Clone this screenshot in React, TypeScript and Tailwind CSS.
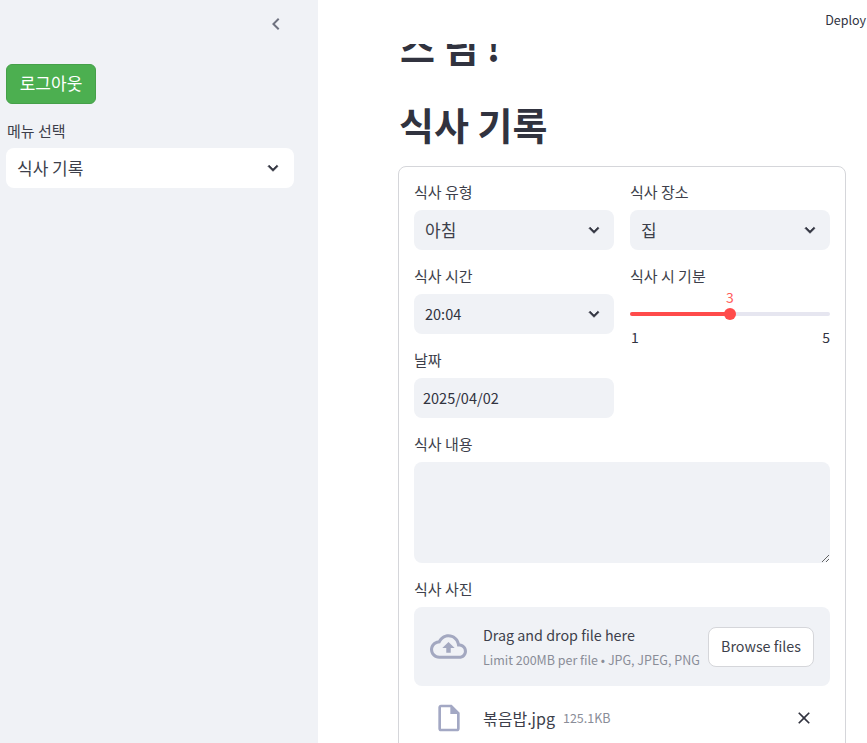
const font = '"Noto Sans CJK KR", "Noto Sans", sans-serif';

function Chevron() {
  return (
    <svg width="20" height="20" viewBox="0 0 24 24" fill="#31333f" className="shrink-0">
      <path d="M16.59 8.59L12 13.17 7.41 8.59 6 10l6 6 6-6z" stroke="#31333f" strokeWidth="0.8" />
    </svg>
  );
}

function Label({ children }: { children: React.ReactNode }) {
  return <div className="h-[20px] mb-[8px] text-[15px] leading-[20px] text-[#3d3f4b]">{children}</div>;
}

function Select({ value, small = false }: { value: string; small?: boolean }) {
  return (
    <div className="h-[40px] rounded-[8px] bg-[#f0f2f6] flex items-center justify-between pl-[11px] pr-[4px] text-[#31333f]">
      <span className={small ? "text-[14.5px]" : "text-[17px] text-[#3d3f4b]"}>{value}</span>
      <span className="w-[32px] flex justify-center"><Chevron /></span>
    </div>
  );
}

export default function App() {
  return (
    <div className="flex h-[743px] w-[867px] overflow-hidden bg-white text-[#31333f]" style={{ fontFamily: font }}>
      <aside className="w-[318px] shrink-0 bg-[#f0f2f6] px-[6px]">
        <div className="h-[64px] flex justify-end pr-[10px] pt-[12px]">
          <svg width="24" height="24" viewBox="0 0 24 24" fill="#6f7280" className="mr-[14px]">
            <path d="M15.41 7.41L14 6l-6 6 6 6 1.41-1.41L10.83 12z" />
          </svg>
        </div>
        <button className="h-[40px] w-[90px] rounded-[6px] border border-[#45a049] bg-[#4caf50] text-white text-[17px] leading-[36px] pb-[3px]">로그아웃</button>
        <div className="mt-[17px] h-[20px] mb-[7px] text-[15px] leading-[20px] pl-[1px] text-[#3d3f4b]">메뉴 선택</div>
        <div className="h-[40px] w-[288px] rounded-[8px] bg-white flex items-center justify-between pl-[11px] pr-[11px] text-[17px] text-[#3d3f4b]">
          <span className="pb-[1px]">식사 기록</span>
          <Chevron />
        </div>
      </aside>

      <main className="flex-1 min-w-0 flex flex-col">
        <header className="h-[44px] shrink-0 flex justify-end pt-[10px] pr-[1px]">
          <span className="text-[12.5px] leading-[20px] text-[#31333f] whitespace-nowrap">Deploy</span>
        </header>
        <div className="flex-1 min-h-0 overflow-hidden pl-[80px] pr-[21px]">
          <div className="-mt-[20px] ml-[2px] h-[46px] text-[38px] leading-[44px] font-bold whitespace-nowrap">스 님<span className="ml-[8px]">!</span></div>
          <h2 className="mt-[24px] ml-[1px] h-[60px] text-[38px] leading-[60px] font-bold whitespace-nowrap">식사 기록</h2>
          <div className="mt-[12px] rounded-[8px] border border-[#d5d6da] px-[15px] pt-[15px] pb-[40px]">
            <div className="flex gap-x-[16px] w-[416px]">
              <div className="w-[200px] flex flex-col gap-y-[16px]">
                <div>
                  <Label>식사 유형</Label>
                  <Select value="아침" />
                </div>
                <div>
                  <Label>식사 시간</Label>
                  <Select value="20:04" small />
                </div>
                <div>
                  <Label>날짜</Label>
                  <div className="h-[40px] rounded-[8px] bg-[#f0f2f6] flex items-center pl-[9px] text-[14.5px]">2025/04/02</div>
                </div>
              </div>
              <div className="w-[200px] flex flex-col gap-y-[16px]">
                <div>
                  <Label>식사 장소</Label>
                  <Select value="집" />
                </div>
                <div>
                  <Label>식사 시 기분</Label>
                  <div className="text-center text-[14px] leading-[14px] text-[#ff5c5c] -mt-[4px]">3</div>
                  <div className="relative h-[4px] mt-[8px] rounded-full bg-[#e6e6f0]">
                    <div className="h-full w-1/2 rounded-full bg-[#ff4b4b]" />
                    <div className="absolute left-1/2 top-1/2 size-[12px] -translate-x-1/2 -translate-y-1/2 rounded-full bg-[#ff4b4b]" />
                  </div>
                  <div className="mt-[13px] flex justify-between text-[14px] leading-[16px]">
                    <span className="pl-[1px]">1</span>
                    <span>5</span>
                  </div>
                </div>
              </div>
            </div>
            <div className="mt-[16px] w-[416px]">
              <Label>식사 내용</Label>
              <textarea className="block h-[101px] w-full rounded-[8px] bg-[#f0f2f6] outline-none" />
            </div>
            <div className="mt-[16px] w-[416px]">
              <Label>식사 사진</Label>
              <div className="h-[79px] rounded-[8px] bg-[#f0f2f6] flex items-center pl-[16px] pr-[16px]">
                <svg width="37" height="37" viewBox="0 0 24 24" fill="#a3a8c0" className="shrink-0">
                  <path d="M19.35 10.04C18.67 6.59 15.64 4 12 4 9.11 4 6.6 5.64 5.35 8.04 2.34 8.36 0 10.91 0 14c0 3.31 2.69 6 6 6h13c2.76 0 5-2.24 5-5 0-2.64-2.05-4.78-4.65-4.96zM19 18H6c-2.21 0-4-1.79-4-4 0-2.05 1.53-3.76 3.56-3.97l1.07-.11.5-.95C8.08 7.14 9.94 6 12 6c2.62 0 4.88 1.86 5.39 4.43l.3 1.5 1.53.11c1.56.1 2.78 1.41 2.78 2.96 0 1.65-1.35 3-3 3zM8 13h2.55v3h2.9v-3H16l-4-4z" />
                </svg>
                <div className="ml-[16px] flex-1 min-w-0 whitespace-nowrap">
                  <div className="text-[14.3px] leading-[20px] mb-[7px] text-[#3d3f4b]">Drag and drop file here</div>
                  <div className="text-[12.5px] leading-[16px] text-[#8a8d98]">Limit 200MB per file • JPG, JPEG, PNG</div>
                </div>
                <button className="h-[40px] w-[106px] shrink-0 rounded-[8px] border border-[#d5d6da] bg-white text-[14.3px] text-[#3d3f4b] pb-[2px]">Browse files</button>
              </div>
              <div className="mt-[16px] flex items-center h-[32px] pl-[19px]">
                <svg width="32" height="32" viewBox="0 0 24 24" fill="#a3a8c4" className="shrink-0">
                  <path d="M14 2H6c-1.1 0-1.99.9-1.99 2L4 20c0 1.1.89 2 1.99 2H18c1.1 0 2-.9 2-2V8l-6-6zM6 20V4h7v5h5v11H6z" />
                </svg>
                <span className="ml-[18px] text-[16px] text-[#3d3f4b]">볶음밥.jpg</span>
                <span className="ml-[8px] text-[12.5px] text-[#8a8d98]">125.1KB</span>
                <svg width="20" height="20" viewBox="0 0 24 24" fill="#31333f" className="ml-auto mr-[16px] shrink-0">
                  <path d="M19 6.41L17.59 5 12 10.59 6.41 5 5 6.41 10.59 12 5 17.59 6.41 19 12 13.41 17.59 19 19 17.59 13.41 12z" />
                </svg>
              </div>
            </div>
          </div>
        </div>
      </main>
    </div>
  );
}
